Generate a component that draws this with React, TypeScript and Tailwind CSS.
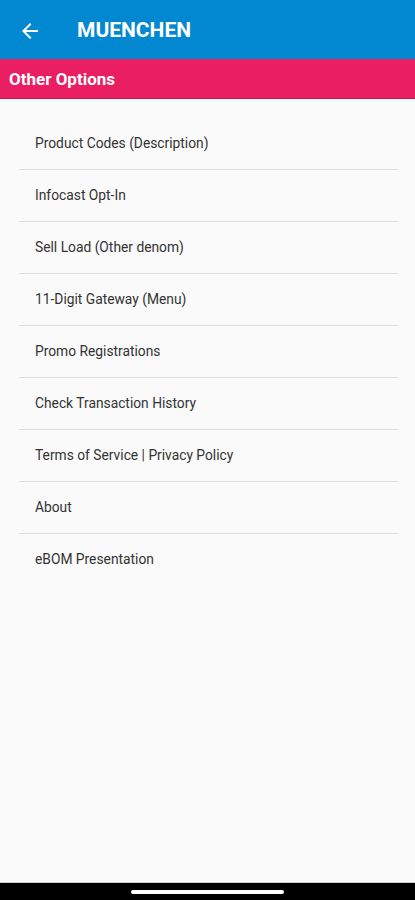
import React from "react";

const items = [
  "Product Codes (Description)",
  "Infocast Opt-In",
  "Sell Load (Other denom)",
  "11-Digit Gateway (Menu)",
  "Promo Registrations",
  "Check Transaction History",
  "Terms of Service | Privacy Policy",
  "About",
  "eBOM Presentation",
];

export default function App() {
  return (
    <div
      className="w-[415px] h-[900px] flex flex-col bg-[#fafafa] overflow-hidden"
      style={{ fontFamily: "Roboto, 'Noto Sans', sans-serif" }}
    >
      <div className="h-[59px] bg-[#0288d1] flex items-center shrink-0 pt-[2px]">
        <div className="w-[77px] pl-[18px] flex items-center">
          <svg width="24" height="24" viewBox="0 0 24 24" fill="#ffffff">
            <path d="M20 11H7.83l5.59-5.59L12 4l-8 8 8 8 1.41-1.41L7.83 13H20v-2z" />
          </svg>
        </div>
        <div className="text-white text-[21px] font-bold">MUENCHEN</div>
      </div>
      <div className="h-[40px] bg-[#e91e63] flex items-center pl-[9px] pt-[2px] shrink-0 border-b border-[#c2185b]">
        <span className="text-white text-[17px] font-bold">Other Options</span>
      </div>
      <div className="flex-1 flex flex-col pt-[19px]">
        {items.map((t, i) => (
          <div key={i} className="ml-[19px] mr-[17px]">
            <div className="h-[51px] flex items-center pl-[16px] text-[13.8px] text-[#333333]">
              {t}
            </div>
            {i < items.length - 1 && <div className="h-px bg-[#dddddd]" />}
          </div>
        ))}
      </div>
      <div className="h-[18px] bg-black border-t border-[#cfcfcf] flex justify-center pt-[7px] shrink-0">
        <div className="w-[153px] h-[4px] rounded-full bg-white" />
      </div>
    </div>
  );
}
